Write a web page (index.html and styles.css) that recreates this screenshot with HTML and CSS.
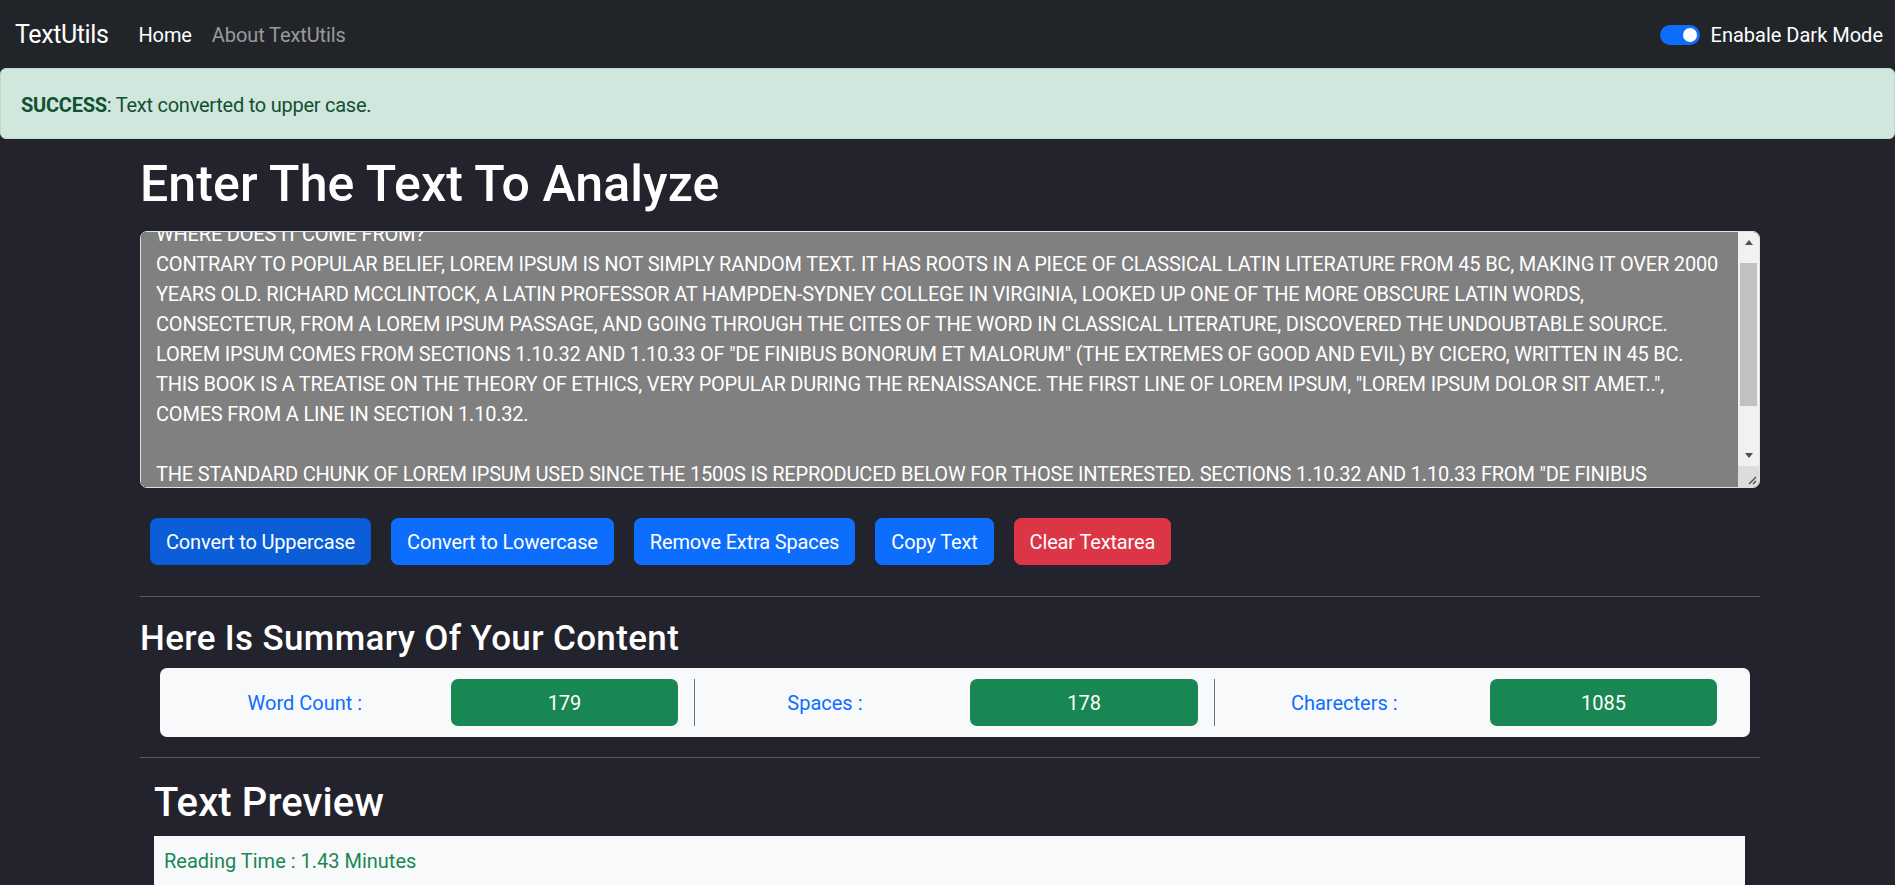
FILE: index.html
```html
<!DOCTYPE html>
<html lang="en">
<head>
<meta charset="utf-8">
<title>TextUtils - Home</title>
<link rel="stylesheet" href="styles.css">
</head>
<body>
<nav class="navbar">
  <a class="brand" href="#">TextUtils</a>
  <ul class="nav-links">
    <li><a class="nav-link active" href="#">Home</a></li>
    <li><a class="nav-link" href="#">About TextUtils</a></li>
  </ul>
  <div class="switch">
    <input class="switch-input" type="checkbox" id="darkSwitch" checked>
    <label class="switch-label" for="darkSwitch">Enabale Dark Mode</label>
  </div>
</nav>

<div class="alert">
  <strong>SUCCESS</strong>: Text converted to upper case.
</div>

<main class="container">
  <h1 class="title">Enter The Text To Analyze</h1>
  <div class="textwrap">
    <textarea class="textbox" id="myBox" rows="8">WHERE DOES IT COME FROM?
CONTRARY TO POPULAR BELIEF, LOREM IPSUM IS NOT SIMPLY RANDOM TEXT. IT HAS ROOTS IN A PIECE OF CLASSICAL LATIN LITERATURE FROM 45 BC, MAKING IT OVER 2000
YEARS OLD. RICHARD MCCLINTOCK, A LATIN PROFESSOR AT HAMPDEN-SYDNEY COLLEGE IN VIRGINIA, LOOKED UP ONE OF THE MORE OBSCURE LATIN WORDS,
CONSECTETUR, FROM A LOREM IPSUM PASSAGE, AND GOING THROUGH THE CITES OF THE WORD IN CLASSICAL LITERATURE, DISCOVERED THE UNDOUBTABLE SOURCE.
LOREM IPSUM COMES FROM SECTIONS 1.10.32 AND 1.10.33 OF "DE FINIBUS BONORUM ET MALORUM" (THE EXTREMES OF GOOD AND EVIL) BY CICERO, WRITTEN IN 45 BC.
THIS BOOK IS A TREATISE ON THE THEORY OF ETHICS, VERY POPULAR DURING THE RENAISSANCE. THE FIRST LINE OF LOREM IPSUM, "LOREM IPSUM DOLOR SIT AMET..",
COMES FROM A LINE IN SECTION 1.10.32.

THE STANDARD CHUNK OF LOREM IPSUM USED SINCE THE 1500S IS REPRODUCED BELOW FOR THOSE INTERESTED. SECTIONS 1.10.32 AND 1.10.33 FROM "DE FINIBUS
BONORUM ET MALORUM" BY CICERO ARE ALSO REPRODUCED IN THEIR EXACT ORIGINAL FORM, ACCOMPANIED BY ENGLISH VERSIONS FROM THE 1914 TRANSLATION BY H. RACKHAM.</textarea>
    <div class="scrollbar" aria-hidden="true">
      <div class="sb-btn"><span class="arrow-up"></span></div>
      <div class="sb-track"><div class="sb-thumb"></div></div>
      <div class="sb-btn"><span class="arrow-down"></span></div>
      <div class="sb-corner">
        <svg width="21" height="21" viewBox="0 0 21 21">
          <line x1="18" y1="11" x2="11" y2="18" stroke="#4a4a4a" stroke-width="1.2"/>
          <line x1="18" y1="15" x2="15" y2="18" stroke="#4a4a4a" stroke-width="1.2"/>
        </svg>
      </div>
    </div>
  </div>

  <div class="actions">
    <button class="btn btn-primary focused">Convert to Uppercase</button>
    <button class="btn btn-primary">Convert to Lowercase</button>
    <button class="btn btn-primary">Remove Extra Spaces</button>
    <button class="btn btn-primary">Copy Text</button>
    <button class="btn btn-danger">Clear Textarea</button>
  </div>

  <hr class="rule">

  <h3 class="subtitle">Here Is Summary Of Your Content</h3>
  <div class="summary">
    <div class="stat">
      <span class="stat-label">Word Count :</span>
      <span class="stat-value">179</span>
    </div>
    <div class="stat">
      <span class="stat-label">Spaces :</span>
      <span class="stat-value">178</span>
    </div>
    <div class="stat">
      <span class="stat-label">Charecters :</span>
      <span class="stat-value">1085</span>
    </div>
  </div>

  <hr class="rule">

  <section class="preview">
    <h2 class="preview-title">Text Preview</h2>
    <div class="preview-box">
      <p class="reading">Reading Time : 1.43 Minutes</p>
    </div>
  </section>
</main>
<script src="script.js"></script>
</body>
</html>
```
FILE: styles.css
```css
* { box-sizing: border-box; }

html, body { height: 100%; }

body {
  margin: 0;
  background: #22232d;
  color: #fff;
  font-family: Roboto, "Noto Sans", sans-serif;
  font-size: 20px;
  line-height: 30px;
  overflow: hidden;
}

/* ---------- navbar ---------- */
.navbar {
  display: flex;
  align-items: center;
  height: 68px;
  padding: 1px 12px 0 15px;
  background: #212529;
}

.brand {
  font-size: 25px;
  line-height: 36px;
  letter-spacing: -0.4px;
  color: #fff;
  text-decoration: none;
  margin-right: 20px;
}

.nav-links {
  display: flex;
  list-style: none;
  margin: 0;
  padding: 0;
  flex: 1;
}

.nav-link {
  display: block;
  padding: 0 10px;
  letter-spacing: -0.1px;
  color: rgba(255, 255, 255, 0.55);
  text-decoration: none;
}

.nav-link.active { color: #fff; }

.switch {
  display: flex;
  align-items: center;
  gap: 11px;
}

.switch-input {
  appearance: none;
  -webkit-appearance: none;
  margin: 0;
  width: 40px;
  height: 20px;
  border-radius: 10px;
  background: #0d6efd;
  position: relative;
}

.switch-input::after {
  content: "";
  position: absolute;
  right: 3px;
  top: 3px;
  width: 14px;
  height: 14px;
  border-radius: 50%;
  background: #fff;
}

.switch-label { color: #fff; }

/* ---------- alert ---------- */
.alert {
  height: 71px;
  padding: 21px 20px 18px;
  background: #d1e7dd;
  border: 1px solid #badbcc;
  border-radius: 6px;
  color: #0f5132;
  letter-spacing: -0.25px;
}

.alert strong { font-weight: 700; }

/* ---------- main ---------- */
.container {
  width: 1620px;
  margin-left: 140px;
  padding-top: 15px;
}

.title {
  margin: 0 0 17px;
  font-size: 50px;
  line-height: 60px;
  font-weight: 500;
  letter-spacing: 0.1px;
}

.textwrap { position: relative; }

.textbox {
  display: block;
  width: 100%;
  height: 257px;
  margin: 0;
  padding: 7.5px 36px 7.5px 15px;
  background: #808080;
  color: #fff;
  border: 1px solid #dee2e6;
  border-radius: 7px;
  font-family: Roboto, "Noto Sans", sans-serif;
  font-size: 20px;
  line-height: 30px;
  letter-spacing: -0.2px;
  white-space: pre;
  overflow-x: hidden;
  overflow-y: scroll;
  scrollbar-width: none;
  resize: none;
  outline: none;
}

.textbox::-webkit-scrollbar { display: none; }

/* drawn scrollbar laid over the textarea's right edge */
.scrollbar {
  position: absolute;
  top: 1px;
  right: 1px;
  bottom: 1px;
  width: 21px;
  display: flex;
  flex-direction: column;
  background: #f1f1f1;
  border-radius: 0 6px 6px 0;
  overflow: hidden;
}

.sb-btn {
  height: 21px;
  display: flex;
  align-items: center;
  justify-content: center;
}

.arrow-up,
.arrow-down {
  width: 0;
  height: 0;
  border-left: 4.5px solid transparent;
  border-right: 4.5px solid transparent;
}

.arrow-up { border-bottom: 5px solid #505050; }
.arrow-down { border-top: 5px solid #505050; margin-top: -1px; }

.sb-track {
  flex: 1;
  padding: 10px 2px 0;
}

.sb-thumb {
  height: 143px;
  background: #c1c1c1;
}

.sb-corner {
  height: 21px;
  background: #dcdcdc;
}

.sb-corner svg { display: block; }

.actions {
  display: flex;
  margin-top: 30px;
}

.btn {
  margin: 0 10px;
  padding: 7.5px 15px;
  border: 1px solid transparent;
  border-radius: 7px;
  font-family: inherit;
  font-size: 20px;
  line-height: 30px;
  letter-spacing: -0.15px;
  color: #fff;
  cursor: pointer;
}

.btn-primary { background: #0d6efd; border-color: #0d6efd; }
.btn-primary.focused { background: #0b5ed7; border-color: #0a58ca; }
.btn-danger { background: #dc3545; border-color: #dc3545; }

.rule {
  margin: 31px 0 21px;
  border: 0;
  border-top: 1px solid rgba(255, 255, 255, 0.25);
}

.subtitle {
  margin: 0 0 8px;
  font-size: 35px;
  line-height: 42px;
  font-weight: 500;
  letter-spacing: 0.35px;
}

.summary {
  display: grid;
  grid-template-columns: 1fr 1fr 1fr;
  margin: 0 10px 20px 20px;
  padding: 11px 17px 11px 15px;
  background: #f8f9fa;
  border-radius: 7px;
}

.stat {
  display: grid;
  grid-template-columns: 1fr 1fr;
  align-items: center;
}

.stat + .stat { border-left: 1px solid #6c757d; }

.stat-label {
  text-align: center;
  color: #0d6efd;
}

.stat-value {
  margin: 0 16px;
  height: 47px;
  display: flex;
  align-items: center;
  justify-content: center;
  background: #198754;
  color: #fff;
  border-radius: 7px;
}

.summary + .rule { margin-top: 0; }

.preview { padding: 0 15px 0 14px; }

.preview-title {
  margin: 0 0 9px;
  font-size: 40px;
  line-height: 48px;
  font-weight: 500;
  letter-spacing: 0.1px;
}

.preview-box {
  background: #f8f9fa;
  padding: 10px 10px;
  min-height: 120px;
}

.reading {
  margin: 0;
  color: #198754;
}
```
FILE: script.js
```js
document.addEventListener('DOMContentLoaded', function () {
  var box = document.getElementById('myBox');
  box.scrollTop = 21;
});
```
